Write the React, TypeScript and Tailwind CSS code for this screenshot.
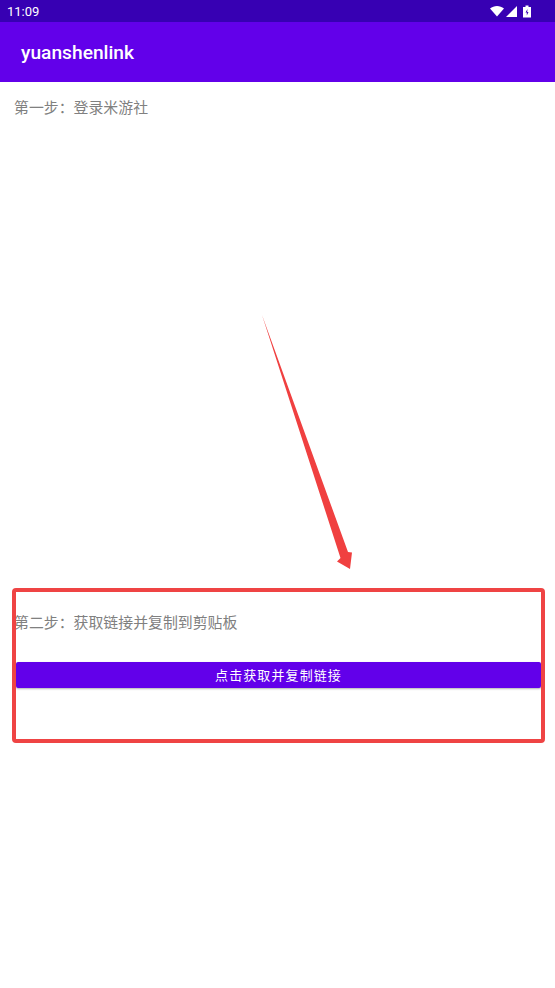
const cjk = "font-['Roboto','Noto_Sans_CJK_SC',sans-serif]";

function StatusIcons() {
  return (
    <svg width="41" height="14" viewBox="0 0 41 14" className="text-white">
      {/* wifi */}
      <path d="M0 3.5 C4 0 10 0 14 3.5 L7 11.5 Z" fill="currentColor" />
      {/* signal */}
      <path d="M27 1 V12 H16 Z" fill="currentColor" />
      {/* battery */}
      <path d="M33 2 H35.5 V0.5 H38.5 V2 H41 V12.5 H33 Z" fill="currentColor" />
      <path d="M37.5 4 L35.5 7.6 H36.8 V10.6 L38.5 7 H37.2 Z" fill="#3700B3" />
    </svg>
  );
}

export default function App() {
  return (
    <div className={`relative h-[988px] w-[555px] overflow-hidden bg-white ${cjk}`}>
      <div className="flex h-[22px] items-center justify-between bg-[#3700B3] pl-[7px] pr-[24px] pt-[1px] text-[13px] text-white">
        <span>11:09</span>
        <StatusIcons />
      </div>
      <header className="flex h-[60px] items-center bg-[#6200EA] pl-[21px] pt-[2px] text-[19.2px] font-medium text-white">
        yuanshenlink
      </header>

      <main className="flex flex-col pl-[14px] text-[14.9px] text-[#808080]">
        <p className="mt-[14.5px] h-[22px] leading-[22px]">第一步：登录米游社</p>
        <p className="mt-[493.5px] h-[22px] leading-[22px]">第二步：获取链接并复制到剪贴板</p>
        <button className="mt-[28px] ml-[2px] h-[26px] w-[525px] rounded-[2px] bg-[#6200EA] pt-[1px] text-[13px] tracking-[1.1px] text-white shadow-[0_1px_2px_rgba(0,0,0,0.3)]">
          点击获取并复制链接
        </button>
      </main>

      {/* red annotation */}
      <div className="absolute left-[12px] top-[588px] h-[155px] w-[533px] rounded-[4px] border-[4px] border-[#EF4444]" />
      <svg className="absolute left-0 top-0" width="555" height="988" viewBox="0 0 555 988">
        <path
          d="M262 315 L348 552 L352 552.5 L350 569 L337 561.5 L340.5 558 Z"
          fill="#F04040"
        />
      </svg>
    </div>
  );
}
